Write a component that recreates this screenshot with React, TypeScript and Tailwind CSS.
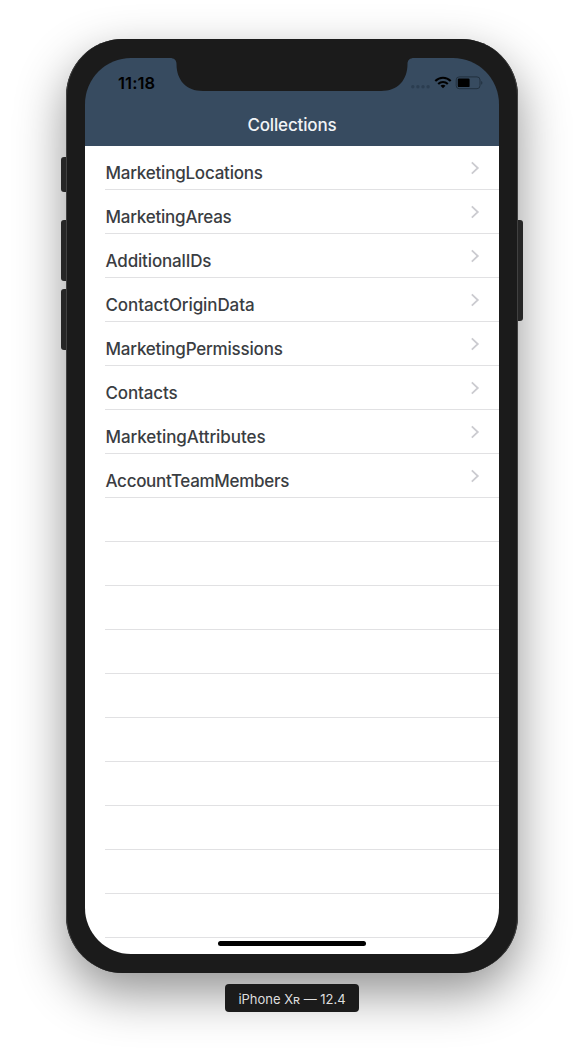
const collections = [
  { name: "MarketingLocations", tracking: "tracking-[-0.22px]" },
  { name: "MarketingAreas", tracking: "tracking-[-0.23px]" },
  { name: "AdditionalIDs", tracking: "tracking-[-0.15px]" },
  { name: "ContactOriginData", tracking: "tracking-[-0.1px]" },
  { name: "MarketingPermissions", tracking: "tracking-[-0.2px]" },
  { name: "Contacts", tracking: "tracking-[-0.15px]" },
  { name: "MarketingAttributes", tracking: "tracking-[-0.07px]" },
  { name: "AccountTeamMembers", tracking: "tracking-[-0.3px]" },
];

const emptyRows = Array.from({ length: 10 }, (_, i) => i);

function Chevron() {
  return (
    <svg width="10" height="14" viewBox="0 0 10 14" fill="none" className="mt-[15px] mr-[19px] shrink-0">
      <path d="M1.8 1.3L7.8 7L1.8 12.7" stroke="#cbcbd0" strokeWidth="1.8" />
    </svg>
  );
}

function Notch() {
  return (
    <svg width="244" height="33" viewBox="0 0 244 33" className="absolute top-0 left-[85px]">
      <path
        d="M0 0H244C240 0 237.5 2 237.5 6C237.5 22 228 33 211 33H33C16 33 6.5 22 6.5 6C6.5 2 4 0 0 0Z"
        fill="#1b1b1b"
      />
    </svg>
  );
}

function StatusIcons() {
  return (
    <svg width="73" height="14" viewBox="0 0 73 14" className="mt-[18px] mr-[16px]">
      <g fill="#2b3d50">
        <circle cx="2.8" cy="10.7" r="1.7" />
        <circle cx="7.9" cy="10.7" r="1.7" />
        <circle cx="13" cy="10.7" r="1.7" />
        <circle cx="18.1" cy="10.7" r="1.7" />
      </g>
      <g transform="translate(0.8 0)">
        <g fill="none" stroke="#000" strokeWidth="2.1">
          <path d="M24.5 4.9C28.9 0.6 35.5 0.6 39.9 4.9" />
          <path d="M27.4 7.9C30.1 5.3 34.3 5.3 37 7.9" />
        </g>
        <path d="M29.7 9.7C31.2 8.4 33.2 8.4 34.7 9.7L32.2 12.2Z" fill="#000" />
        <rect x="45.4" y="0.9" width="23.8" height="11.8" rx="3" fill="none" stroke="#22313f" />
        <rect x="47" y="2.5" width="11.8" height="8.6" rx="1.2" fill="#000" />
        <path d="M70.4 5C72 5.5 72 8.3 70.4 8.8Z" fill="#22313f" />
      </g>
    </svg>
  );
}

function SideButton({ className }: { className: string }) {
  return <div className={`absolute w-[7px] bg-[#262626] ${className}`} />;
}

export default function App() {
  return (
    <div className="flex h-[1048px] w-[584px] flex-col items-center overflow-hidden bg-white pt-[39px] font-['Inter','Liberation_Sans',sans-serif]">
      <div className="relative h-[934px] w-[452px] rounded-[57px] bg-[#1b1b1b] p-[19px] shadow-[0_20px_50px_rgba(0,0,0,0.43)]">
        <SideButton className="top-[118px] -left-[5px] h-[35px] rounded-l-[3px]" />
        <SideButton className="top-[181px] -left-[5px] h-[61px] rounded-l-[3px]" />
        <SideButton className="top-[250px] -left-[5px] h-[61px] rounded-l-[3px]" />
        <SideButton className="top-[181px] -right-[5px] h-[101px] rounded-r-[3px]" />
        <div className="pointer-events-none absolute inset-0 rounded-[57px] border-x border-[#414141] bg-[#1b1b1b]" />

        <div className="relative flex h-[896px] w-[414px] flex-col">
          <header className="relative h-[88px] shrink-0 rounded-t-[46px] bg-[#374b60]">
            <Notch />
            <div className="flex h-[44px] items-start justify-between">
              <span className="mt-[15px] ml-[33px] text-[16.5px] leading-[20px] font-semibold tracking-[0.1px] text-black">
                11:18
              </span>
              <StatusIcons />
            </div>
            <h1 className="text-center text-[17px] leading-[46px] font-medium tracking-[-0.15px] text-[#f1f4f6]">
              Collections
            </h1>
          </header>

          <ul className="flex-1 rounded-b-[46px] bg-white pl-[20px]">
            {collections.map((item) => (
              <li key={item.name} className="flex h-[44px] items-start justify-between border-b border-[#e1e1e3]">
                <span
                  className={`mt-[17px] ml-[0.5px] text-[17px] leading-[20px] font-medium text-[#3a3d42] ${item.tracking}`}
                >
                  {item.name}
                </span>
                <Chevron />
              </li>
            ))}
            {emptyRows.map((row) => (
              <li
                key={row}
                className="h-[44px] border-b border-[#e1e1e3] last:mr-[11px]"
              />
            ))}
          </ul>
          <div className="absolute bottom-[8px] left-[133px] h-[5px] w-[148px] rounded-full bg-black" />
        </div>
      </div>

      <div className="relative mt-[11px] h-[28px] w-[134px] rounded-[4px] bg-[#1b1b1b] text-center text-[13px] leading-[30px] tracking-[-0.02px] text-[#dedede]">
        iPhone Xʀ — 12.4
      </div>
    </div>
  );
}
